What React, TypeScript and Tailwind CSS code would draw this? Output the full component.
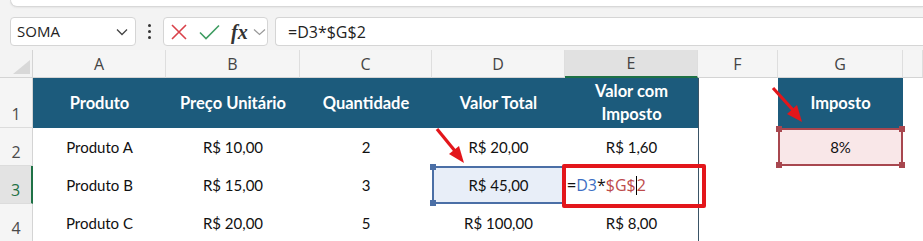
import React from 'react';

const letters = ['A', 'B', 'C', 'D', 'E', 'F', 'G', ''];

const RowHead: React.FC<{ n: number; active?: boolean }> = ({ n, active }) => (
    <div
        className={`flex items-end justify-center pb-[1px] border-b border-[#dcdcdc] text-[16px] font-['Open_Sans',sans-serif] ${
            active ? 'bg-[#e3e3e3] text-[#1e7145] border-r-2 border-r-[#1e7145]' : 'bg-[#f5f5f5] text-[#4a4a4a] border-r border-r-[#d4d4d4]'
        }`}
    >
        {n}
    </div>
);

const Head: React.FC<{ children?: React.ReactNode }> = ({ children }) => (
    <div className="bg-[#1c5b7c] text-white font-bold text-[16.5px] leading-[23px] flex items-center justify-center text-center">
        {children}
    </div>
);

const Cell: React.FC<{ children?: React.ReactNode }> = ({ children }) => (
    <div className="flex items-center justify-center text-[15px] text-[#111]">{children}</div>
);

const Handle: React.FC<{ className: string }> = ({ className }) => (
    <span className={`absolute w-[6px] h-[6px] ${className}`} />
);

export default function App() {
    return (
        <div className="relative w-[923px] h-[241px] overflow-hidden bg-white font-['Lato',sans-serif]">
            {/* ribbon + formula bar */}
            <div className="bg-[#f3f3f3] h-[50px] flex flex-col">
                <div className="h-[7px] ml-[10px] bg-white rounded-bl-lg border-b border-l border-[#d8d8d8] shadow-[0_1px_2px_rgba(0,0,0,0.06)]" />
                <div className="flex items-center h-[29px] mt-[10px] pl-[10px]">
                    <div className="w-[126px] h-full bg-white border border-[#d5d5d5] rounded-[4px] flex items-center justify-between pl-[6px] pr-[6px] text-[15px] text-[#222] font-['Open_Sans',sans-serif]">
                        <span>SOMA</span>
                        <svg width="12" height="8" viewBox="0 0 12 8" className="mr-[1px]">
                            <path d="M1 1.5 L6 6.5 L11 1.5" stroke="#444" strokeWidth="1.3" fill="none" />
                        </svg>
                    </div>
                    <div className="w-[27px] flex flex-col items-center justify-center gap-[3px]">
                        <span className="w-[3px] h-[3px] rounded-full bg-[#333]" />
                        <span className="w-[3px] h-[3px] rounded-full bg-[#333]" />
                        <span className="w-[3px] h-[3px] rounded-full bg-[#333]" />
                    </div>
                    <div className="w-[105px] h-full bg-white border border-[#d5d5d5] rounded-[4px] flex items-center pl-[7px]">
                        <svg width="16" height="16" viewBox="0 0 16 16">
                            <path d="M1 1 L15 15 M15 1 L1 15" stroke="#d9414a" strokeWidth="1.6" />
                        </svg>
                        <svg width="21" height="16" viewBox="0 0 21 16" className="ml-[12px]">
                            <path d="M1 8.5 L7 14.5 L20 1.5" stroke="#3f9d62" strokeWidth="1.6" fill="none" />
                        </svg>
                        <span className="ml-[11px] font-['Liberation_Serif',serif] italic font-bold text-[20px] text-[#333] leading-none">fx</span>
                        <svg width="13" height="8" viewBox="0 0 13 8" className="ml-[5px]">
                            <path d="M1 1.5 L6.5 6.5 L12 1.5" stroke="#999" strokeWidth="1.2" fill="none" />
                        </svg>
                    </div>
                    <div className="ml-[7px] flex-1 h-full bg-white border border-r-0 border-[#d5d5d5] rounded-l-[4px] flex items-center pl-[12px] text-[16px] text-[#222] font-['Open_Sans',sans-serif]">
                        =D3*$G$2
                    </div>
                </div>
            </div>

            {/* grid */}
            <div className="grid grid-cols-[33px_133px_134px_132px_133px_133px_80px_125px_1fr] grid-rows-[28px_50px_38px_38px_38px]">
                {/* column headers */}
                <div className="bg-[#f3f3f3] border-b border-r border-[#d4d4d4] relative">
                    <svg width="18" height="14" viewBox="0 0 18 14" className="absolute right-[1px] bottom-[3px]">
                        <path d="M17 0 L17 14 L0 14 Z" fill="#d8d8d8" />
                    </svg>
                </div>
                {letters.map((l, i) => (
                    <div
                        key={i}
                        className={`flex items-center justify-center text-[16px] font-['Open_Sans',sans-serif] text-[#444] border-r border-[#dedede] ${
                            l === 'E' ? 'bg-[#e1e1e1] border-b-2 border-b-[#1e7145]' : 'bg-[#f5f5f5] border-b border-b-[#d4d4d4]'
                        }`}
                    >
                        {l}
                    </div>
                ))}

                {/* row 1 */}
                <RowHead n={1} />
                <Head>Produto</Head>
                <Head>Preço Unitário</Head>
                <Head>Quantidade</Head>
                <Head>Valor Total</Head>
                <Head>
                    Valor com
                    <br />
                    Imposto
                </Head>
                <div className="border-l border-[#3a5466]" />
                <Head>Imposto</Head>
                <div />

                {/* row 2 */}
                <RowHead n={2} />
                <Cell>Produto A</Cell>
                <Cell>R$ 10,00</Cell>
                <Cell>2</Cell>
                <Cell>R$ 20,00</Cell>
                <Cell>R$ 1,60</Cell>
                <div className="border-l border-[#3a5466]" />
                <div className="relative flex items-center justify-center text-[15px] text-[#111] bg-[#f9e7e8] border-2 border-[#a8474f]">
                    8%
                    <Handle className="bg-[#a8474f] -left-[4px] -top-[4px]" />
                    <Handle className="bg-[#a8474f] -right-[4px] -top-[4px]" />
                    <Handle className="bg-[#a8474f] -left-[4px] -bottom-[4px]" />
                    <Handle className="bg-[#a8474f] -right-[4px] -bottom-[4px]" />
                </div>
                <div />

                {/* row 3 */}
                <RowHead n={3} active />
                <Cell>Produto B</Cell>
                <Cell>R$ 15,00</Cell>
                <Cell>3</Cell>
                <div className="relative flex items-center justify-center text-[15px] text-[#111] bg-[#e8eef8] border-2 border-[#4b6fa6]">
                    R$ 45,00
                    <Handle className="bg-[#4b6fa6] -left-[4px] -top-[4px]" />
                    <Handle className="bg-[#4b6fa6] -left-[4px] -bottom-[4px]" />
                </div>
                <div className="flex items-center pl-[2px] text-[16px] font-['Open_Sans',sans-serif]">
                    <span className="text-[#111]">=</span>
                    <span className="text-[#3d6fc4]">D3</span>
                    <span className="text-[#111]">*</span>
                    <span className="text-[#bd4b4b]">$G$</span>
                    <span className="inline-block w-px h-[19px] bg-black" />
                    <span className="text-[#bd4b4b]">2</span>
                </div>
                <div className="border-l border-[#3a5466]" />
                <div />
                <div />

                {/* row 4 */}
                <RowHead n={4} />
                <Cell>Produto C</Cell>
                <Cell>R$ 20,00</Cell>
                <Cell>5</Cell>
                <Cell>R$ 100,00</Cell>
                <Cell>R$ 8,00</Cell>
                <div className="border-l border-[#3a5466]" />
                <div />
                <div />
            </div>

            {/* annotations */}
            <div className="absolute left-[562px] top-[164px] w-[144px] h-[44px] border-4 border-[#e3161b] rounded-[2px]" />
            <svg className="absolute inset-0 pointer-events-none" width="923" height="241" viewBox="0 0 923 241">
                <line x1="437" y1="129" x2="455" y2="151" stroke="#e3161b" strokeWidth="3.2" />
                <path d="M464 163 L449 154 L459 146 Z" fill="#e3161b" />
                <line x1="773" y1="88" x2="793" y2="110" stroke="#e3161b" strokeWidth="3.2" />
                <path d="M802 122 L787 114 L797 105 Z" fill="#e3161b" />
            </svg>
        </div>
    );
}
